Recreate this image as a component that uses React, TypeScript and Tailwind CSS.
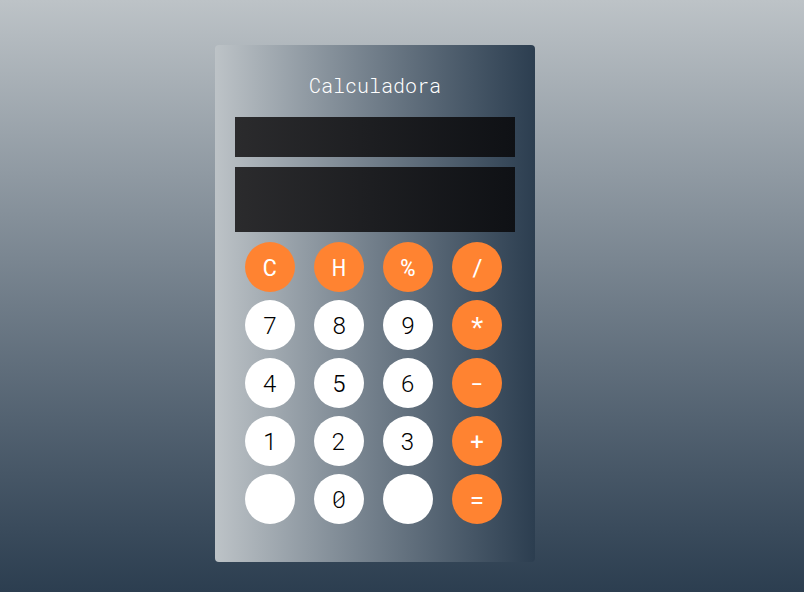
const keys = [
  { label: "C", op: true },
  { label: "H", op: true },
  { label: "%", op: true },
  { label: "/", op: true },
  { label: "7" },
  { label: "8" },
  { label: "9" },
  { label: "*", op: true },
  { label: "4" },
  { label: "5" },
  { label: "6" },
  { label: "-", op: true },
  { label: "1" },
  { label: "2" },
  { label: "3" },
  { label: "+", op: true },
  { label: "" },
  { label: "0" },
  { label: "" },
  { label: "=", op: true },
];

export default function App() {
  return (
    <div
      className="min-h-[592px] w-full bg-gradient-to-b from-[#bdc3c7] to-[#2c3e50] pt-[45px]"
      style={{ fontFamily: '"Roboto Mono", "DejaVu Sans Mono", "Liberation Mono", monospace' }}
    >
      <div className="ml-[215px] flex h-[517px] w-[320px] flex-col rounded bg-gradient-to-r from-[#bdc3c7] to-[#2c3e50] px-5">
        <h1 className="mt-[28px] text-center text-[20px] font-light leading-6 text-white">Calculadora</h1>
        <div className="mt-[20px] h-[40px] w-full bg-gradient-to-r from-[#2b2b2d] to-[#0f1115]" />
        <div className="mt-[10px] h-[65px] w-full bg-gradient-to-r from-[#2b2b2d] to-[#0f1115]" />
        <div className="mt-[10px] grid grid-cols-[50px_50px_50px_50px] gap-x-[19px] gap-y-[8px] pl-[10px]">
          {keys.map((k, i) => (
            <button
              key={i}
              className={`flex h-[50px] w-[50px] items-center justify-center rounded-full text-[24px] leading-none ${
                k.op ? "bg-[#ff8331] font-normal text-white" : "bg-white font-light text-black"
              }`}
            >
              {k.label}
            </button>
          ))}
        </div>
      </div>
    </div>
  );
}
